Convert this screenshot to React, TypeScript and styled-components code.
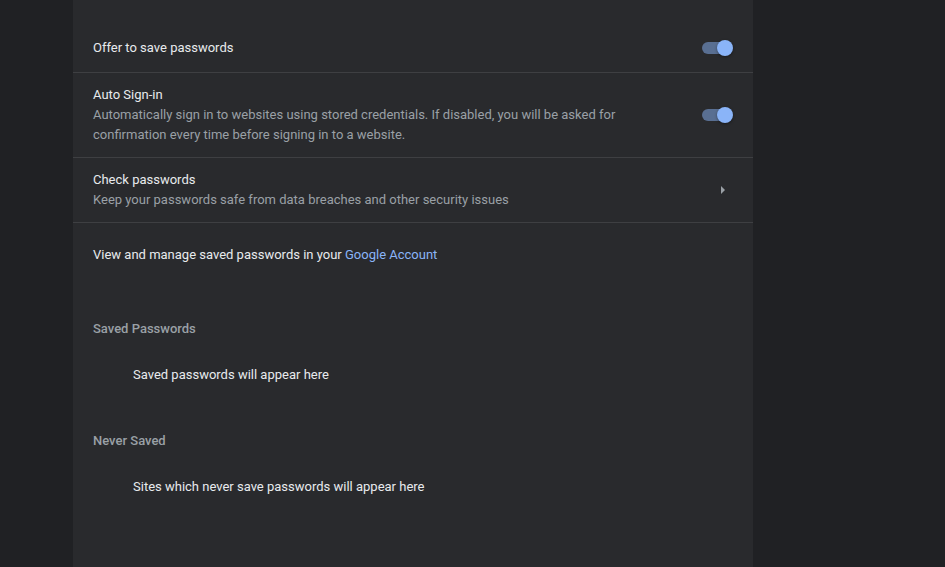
import React from "react";
import styled, { createGlobalStyle } from "styled-components";

const GlobalStyle = createGlobalStyle`
    html, body {
        margin: 0;
        height: 100%;
        background: #202124;
        overflow: hidden;
    }
    body {
        font-family: Roboto, "Liberation Sans", sans-serif;
        font-size: 13px;
        line-height: 20px;
        color: #e8eaed;
    }
`;

const Page = styled.div`
    display: flex;
    height: 567px;
    padding-left: 73px;
`;

const Card = styled.section`
    width: 680px;
    background: #292a2d;
    padding-top: 23px;
`;

const Row = styled.div<{ $divider?: boolean; $minHeight?: number }>`
    display: flex;
    align-items: center;
    min-height: ${(p) => p.$minHeight ?? 48}px;
    box-sizing: border-box;
    padding: 12px 20px;
    border-bottom: ${(p) => (p.$divider ? "1px solid rgba(255, 255, 255, 0.1)" : "none")};
`;

const RowText = styled.div`
    flex: 1;
    display: flex;
    flex-direction: column;
    padding-right: 60px;
`;

const Title = styled.div`
    color: #e8eaed;
`;

const Secondary = styled.div`
    color: #9aa0a6;
`;

const ToggleBox = styled.div`
    position: relative;
    width: 34px;
    height: 16px;
    flex-shrink: 0;
`;

const ToggleBar = styled.span`
    position: absolute;
    left: 3px;
    top: 2px;
    width: 28px;
    height: 12px;
    border-radius: 6px;
    background: #8ab4f8;
    opacity: 0.5;
`;

const ToggleKnob = styled.span`
    position: absolute;
    left: 18px;
    top: 0;
    width: 16px;
    height: 16px;
    border-radius: 50%;
    background: #8ab4f8;
    box-shadow: 0 1px 3px rgba(0, 0, 0, 0.4);
`;

const Arrow = styled.svg`
    width: 4px;
    height: 8px;
    margin-right: 8px;
    flex-shrink: 0;
`;

const LinkRow = styled.div`
    padding: 22px 20px 34px;
`;

const Link = styled.a`
    color: #8ab4f8;
    text-decoration: none;
`;

const Header = styled.h2`
    margin: 0;
    padding: 20px 20px 0;
    font-size: 13px;
    line-height: 20px;
    font-weight: 500;
    color: #9aa0a6;
`;

const EmptyList = styled.div`
    padding: 26px 20px 26px 60px;
    color: #e8eaed;
`;

const Toggle: React.FC = () => (
    <ToggleBox>
        <ToggleBar />
        <ToggleKnob />
    </ToggleBox>
);

const App: React.FC = () => (
    <>
        <GlobalStyle />
        <Page>
            <Card>
                <Row $divider $minHeight={50}>
                    <RowText>
                        <Title>Offer to save passwords</Title>
                    </RowText>
                    <Toggle />
                </Row>
                <Row $divider>
                    <RowText>
                        <Title>Auto Sign-in</Title>
                        <Secondary>
                            Automatically sign in to websites using stored credentials. If disabled, you will be asked for
                            confirmation every time before signing in to a website.
                        </Secondary>
                    </RowText>
                    <Toggle />
                </Row>
                <Row $divider $minHeight={65}>
                    <RowText>
                        <Title>Check passwords</Title>
                        <Secondary>Keep your passwords safe from data breaches and other security issues</Secondary>
                    </RowText>
                    <Arrow viewBox="0 0 4 8">
                        <path d="M0 0 L4 4 L0 8 Z" fill="#9aa0a6" />
                    </Arrow>
                </Row>
                <LinkRow>
                    View and manage saved passwords in your <Link href="#">Google Account</Link>
                </LinkRow>
                <Header>Saved Passwords</Header>
                <EmptyList>Saved passwords will appear here</EmptyList>
                <Header>Never Saved</Header>
                <EmptyList>Sites which never save passwords will appear here</EmptyList>
            </Card>
        </Page>
    </>
);

export default App;
